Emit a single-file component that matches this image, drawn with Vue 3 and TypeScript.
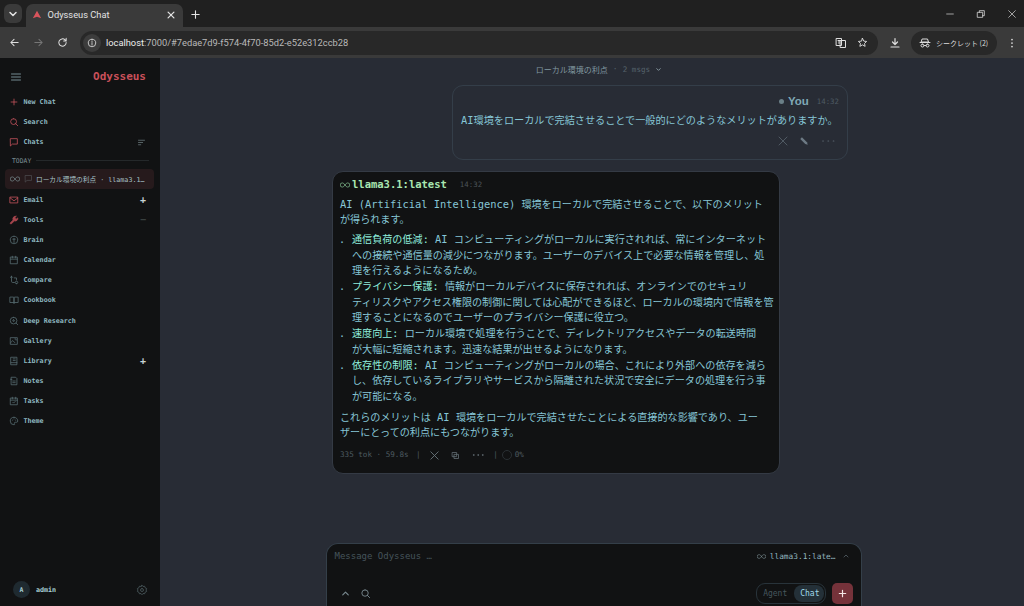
<script setup lang="ts">
interface NavItem {
  label: string
  icon: string
  accent?: boolean
  solid?: boolean
  trail?: string
}

const infinity = 'M12 12c-2-3-4-5-6.500-5a5 5 0 0 0 0 10c2.500 0 4.500-2 6.500-5c2-3 4-5 6.500-5a5 5 0 0 1 0 10c-2.500 0-4.500-2-6.500-5z'

const topNav: NavItem[] = [
  { label: 'New Chat', icon: 'M12 5v14M5 12h14', accent: true },
  { label: 'Search', icon: 'M11 4a7 7 0 1 0 0 14a7 7 0 1 0 0-14M16 16l5 5', accent: true },
  { label: 'Chats', icon: 'M4 4h16v13H8l-4 4z', accent: true, trail: 'sort' }
]

const mainNav: NavItem[] = [
  { label: 'Email', icon: 'M3 5h18v14H3zM3 7l9 7l9-7', accent: true, trail: '+' },
  { label: 'Tools', icon: 'M15 3a6 6 0 0 0-5 9l-7 7v2h3l7-7a6 6 0 0 0 8-7l-4 3l-3-3l3-4z', accent: true, solid: true, trail: '−' },
  { label: 'Brain', icon: 'M12 3a9 9 0 1 0 0 18a9 9 0 1 0 0-18M12 8v10M9 10h6' },
  { label: 'Calendar', icon: 'M4 5h16v16H4zM4 10h16M8 3v4M16 3v4' },
  { label: 'Compare', icon: 'M6 3v12a3 3 0 0 0 3 3h4M3 6l3-3l3 3M18 21a3 3 0 1 0 0-6a3 3 0 1 0 0 6M18 12V7h-5' },
  { label: 'Cookbook', icon: 'M3 5h7a2 2 0 0 1 2 2v13a2 2 0 0 0-2-2H3zM21 5h-7a2 2 0 0 0-2 2v13a2 2 0 0 1 2-2h7z' },
  { label: 'Deep Research', icon: 'M11 3a8 8 0 1 0 0 16a8 8 0 1 0 0-16M17 17l4 4M11 9a2 2 0 1 0 0 4a2 2 0 1 0 0-4' },
  { label: 'Gallery', icon: 'M4 4h16v16H4zM4 16l5-5l5 5M14 7h3v3' },
  { label: 'Library', icon: 'M5 3h14v18H5zM5 16h14M10 7h5M10 11h5', trail: '+' },
  { label: 'Notes', icon: 'M6 3h10l3 3v15H6zM9 12h6M9 16h6M4 8h3' },
  { label: 'Tasks', icon: 'M4 5h16v16H4zM4 10h16M8 3v4M16 3v4M9 15l2 2l4-4' },
  { label: 'Theme', icon: 'M12 3a9 9 0 1 0 0 18c2 0 2-2 1-3s0-3 2-3h3c2 0 3-1 3-3c0-5-4-9-9-9M8 10h.1M12 7h.1M16 10h.1' }
]

interface Item {
  head: string
  lines: string[]
}

// latin runs are set a touch larger than the kana around them
function runs(line: string) {
  return (line.match(/[\x20-\x7e]+|[^\x20-\x7e]+/g) ?? []).map((text) => ({
    text,
    latin: /^[\x20-\x7e]/.test(text)
  }))
}

const userText = 'AI環境をローカルで完結させることで一般的にどのようなメリットがありますか。'

const intro = ['AI (Artificial Intelligence) 環境をローカルで完結させることで、以下のメリット', 'が得られます。']

const points: Item[] = [
  {
    head: '通信負荷の低減:',
    lines: [
      ' AI コンピューティングがローカルに実行されれば、常にインターネット',
      'への接続や通信量の減少につながります。ユーザーのデバイス上で必要な情報を管理し、処',
      '理を行えるようになるため。'
    ]
  },
  {
    head: 'プライバシー保護:',
    lines: [
      ' 情報がローカルデバイスに保存されれば、オンラインでのセキュリ',
      'ティリスクやアクセス権限の制御に関しては心配ができるほど、ローカルの環境内で情報を管',
      '理することになるのでユーザーのプライバシー保護に役立つ。'
    ]
  },
  {
    head: '速度向上:',
    lines: [
      ' ローカル環境で処理を行うことで、ディレクトリアクセスやデータの転送時間',
      'が大幅に短縮されます。迅速な結果が出せるようになります。'
    ]
  },
  {
    head: '依存性の制限:',
    lines: [
      ' AI コンピューティングがローカルの場合、これにより外部への依存を減ら',
      'し、依存しているライブラリやサービスから隔離された状況で安全にデータの処理を行う事',
      'が可能になる。'
    ]
  }
]

const outro = ['これらのメリットは AI 環境をローカルで完結させたことによる直接的な影響であり、ユー', 'ザーにとっての利点にもつながります。']
</script>

<template>
  <div class="window">
    <header class="tabstrip">
      <button class="tab-menu">
        <svg viewBox="0 0 24 24" class="ic12"><path d="M6 9l6 6l6-6" stroke-width="3" /></svg>
      </button>
      <div class="tab">
        <svg viewBox="0 0 24 24" class="favicon"><path d="M12 2L22 20L12 16L2 20z" /></svg>
        <span class="tab-title">Odysseus Chat</span>
        <svg viewBox="0 0 24 24" class="ic10"><path d="M5 5l14 14M19 5L5 19" stroke-width="3" /></svg>
      </div>
      <svg viewBox="0 0 24 24" class="ic11 new-tab"><path d="M12 4v16M4 12h16" stroke-width="2.400" /></svg>
      <div class="win-controls">
        <svg viewBox="0 0 24 24" class="ic10"><path d="M4 12h16" stroke-width="1.600" /></svg>
        <svg viewBox="0 0 24 24" class="ic10"><path d="M4 8h12v12H4zM8 8V4h12v12h-4" stroke-width="1.800" /></svg>
        <svg viewBox="0 0 24 24" class="ic10"><path d="M4 4l16 16M20 4L4 20" stroke-width="1.600" /></svg>
      </div>
    </header>

    <div class="toolbar">
      <svg viewBox="0 0 24 24" class="ic11"><path d="M20 12H4M11 5l-7 7l7 7" stroke-width="2.200" /></svg>
      <svg viewBox="0 0 24 24" class="ic11 dim"><path d="M4 12h16M13 5l7 7l-7 7" stroke-width="2.200" /></svg>
      <svg viewBox="0 0 24 24" class="ic11"><path d="M20 12a8 8 0 1 1-2.500-5.800L20 8.500M20 3v5.500h-5.500" stroke-width="2.200" /></svg>
      <div class="omnibox">
        <span class="info-chip">
          <svg viewBox="0 0 24 24" class="ic10"><path d="M12 3a9 9 0 1 0 0 18a9 9 0 1 0 0-18M12 11v6M12 7v1.500" stroke-width="2" /></svg>
        </span>
        <span class="url"><b>localhost</b>:7000/#7edae7d9-f574-4f70-85d2-e52e312ccb28</span>
        <span class="grow"></span>
        <svg viewBox="0 0 24 24" class="ic12"><path d="M3 3h10v14H3zM11 7h10v14H11zM6 7h4M8 7v6" stroke-width="2" /></svg>
        <svg viewBox="0 0 24 24" class="ic11"><path d="M12 3l2.800 6l6.200.7l-4.600 4.300l1.300 6.400L12 17.200L6.300 20.400L7.600 14L3 9.700L9.200 9z" stroke-width="2" /></svg>
      </div>
      <svg viewBox="0 0 24 24" class="ic12 download"><path d="M12 3v12M7 10l5 5l5-5M4 20h16" stroke-width="2.400" /></svg>
      <div class="incognito">
        <svg viewBox="0 0 24 24" class="ic12"><path d="M7 4h10l2 6H5zM2 11h20M7 14a3 3 0 1 0 0 6a3 3 0 1 0 0-6M17 14a3 3 0 1 0 0 6a3 3 0 1 0 0-6M10 17h4" stroke-width="2" /></svg>
        <span>シークレット (2)</span>
      </div>
      <svg viewBox="0 0 24 24" class="ic12 kebab"><path d="M12 5v.1M12 12v.1M12 19v.1" stroke-width="3.400" /></svg>
    </div>

    <div class="app">
      <aside class="sidebar">
        <div class="brand">
          <svg viewBox="0 0 24 24" class="burger"><path d="M3 6h18M3 12h18M3 18h18" stroke-width="1.800" /></svg>
          <span class="brand-name">Odysseus</span>
        </div>

        <nav class="nav">
          <a v-for="item in topNav" :key="item.label" class="nav-row">
            <svg viewBox="0 0 24 24" class="nav-icon" :class="{ accent: item.accent }"><path :d="item.icon" /></svg>
            <span>{{ item.label }}</span>
            <svg v-if="item.trail === 'sort'" viewBox="0 0 24 24" class="sort"><path d="M4 6h16M4 12h11M4 18h6" stroke-width="2" /></svg>
          </a>
        </nav>

        <div class="today"><span>TODAY</span><i></i></div>
        <div class="chat-row">
          <svg viewBox="0 0 24 24" class="inf"><path :d="infinity" /></svg>
          <svg viewBox="0 0 24 24" class="chat-ic"><path d="M4 4h16v13H8l-4 4z" /></svg>
          <span class="chat-title">ローカル環境の利点 · llama3.1…</span>
        </div>

        <nav class="nav main-nav">
          <a v-for="item in mainNav" :key="item.label" class="nav-row">
            <svg viewBox="0 0 24 24" class="nav-icon" :class="{ accent: item.accent, solid: item.solid }"><path :d="item.icon" /></svg>
            <span>{{ item.label }}</span>
            <em v-if="item.trail" class="trail" :class="{ faint: item.trail === '−' }">{{ item.trail }}</em>
          </a>
        </nav>

        <div class="grow"></div>

        <div class="account">
          <span class="avatar">A</span>
          <span class="acct-name">admin</span>
          <svg viewBox="0 0 24 24" class="gear"><path d="M12 2.500l2 2.500l3.200-.5l1 3l3 1.500l-1 3l1 3l-3 1.500l-1 3l-3.200-.5l-2 2.500l-2-2.500l-3.200.5l-1-3l-3-1.500l1-3l-1-3l3-1.500l1-3l3.200.5zM12 9a3 3 0 1 0 0 6a3 3 0 1 0 0-6" /></svg>
        </div>
      </aside>

      <main class="main">
        <div class="conv-title">
          <span>ローカル環境の利点</span>
          <span class="dot">·</span>
          <span class="count">2 msgs</span>
          <svg viewBox="0 0 24 24" class="chev"><path d="M6 9l6 6l6-6" stroke-width="3" /></svg>
        </div>

        <div class="thread">
          <section class="user-msg">
            <div class="user-head">
              <i class="online"></i>
              <strong>You</strong>
              <time>14:32</time>
            </div>
            <p class="user-text">
              <span v-for="run in runs(userText)" :key="run.text" :class="{ latin: run.latin }">{{ run.text }}</span>
            </p>
            <div class="user-actions">
              <svg viewBox="0 0 24 24"><path d="M4 4l16 16M20 4L4 20" stroke-width="1.600" /></svg>
              <svg viewBox="0 0 24 24" class="pencil"><path d="M3 7l4-4l12 12l2 6l-6-2z" /></svg>
              <svg viewBox="0 0 24 24" class="dots"><path d="M3 12h1M12 12h1M21 12h1" stroke-width="2" /></svg>
            </div>
          </section>

          <section class="bot-msg">
            <div class="bot-head">
              <svg viewBox="0 0 24 24" class="inf-green"><path :d="infinity" /></svg>
              <strong>llama3.1:latest</strong>
              <time>14:32</time>
            </div>
            <p class="para">
              <span v-for="line in intro" :key="line" class="line">
                <span v-for="run in runs(line)" :key="run.text" :class="{ latin: run.latin }">{{ run.text }}</span>
              </span>
            </p>
            <ul class="points">
              <li v-for="point in points" :key="point.head">
                <span class="bullet">.</span>
                <div>
                  <span class="line"><b>{{ point.head }}</b><span v-for="run in runs(point.lines[0])" :key="run.text" :class="{ latin: run.latin }">{{ run.text }}</span></span>
                  <span v-for="line in point.lines.slice(1)" :key="line" class="line">{{ line }}</span>
                </div>
              </li>
            </ul>
            <p class="para">
              <span v-for="line in outro" :key="line" class="line">
                <span v-for="run in runs(line)" :key="run.text" :class="{ latin: run.latin }">{{ run.text }}</span>
              </span>
            </p>
            <div class="bot-foot">
              <span>335 tok · 59.8s</span>
              <span class="sep-a">|</span>
              <svg viewBox="0 0 24 24" class="foot-x"><path d="M4 4l16 16M20 4L4 20" stroke-width="2" /></svg>
              <svg viewBox="0 0 24 24" class="foot-copy"><path d="M4 4h11v11H4zM9 9h11v11H9z" stroke-width="2" /></svg>
              <svg viewBox="0 0 24 24" class="foot-dots"><path d="M3 12h1M12 12h1M21 12h1" stroke-width="2.600" /></svg>
              <span class="sep-b">|</span>
              <i class="ring"></i>
              <span class="pct">0%</span>
            </div>
          </section>
        </div>

        <div class="grow"></div>

        <form class="composer" @submit.prevent>
          <div class="composer-top">
            <span class="placeholder">Message Odysseus …</span>
            <span class="model">
              <svg viewBox="0 0 24 24" class="inf-model"><path :d="infinity" /></svg>
              llama3.1:late…
              <svg viewBox="0 0 24 24" class="chev-up"><path d="M6 15l6-6l6 6" stroke-width="2.400" /></svg>
            </span>
          </div>
          <div class="composer-bottom">
            <svg viewBox="0 0 24 24" class="tool"><path d="M6 15l6-6l6 6" stroke-width="2.600" /></svg>
            <svg viewBox="0 0 24 24" class="tool"><path d="M11 4a7 7 0 1 0 0 14a7 7 0 1 0 0-14M16 16l5 5" stroke-width="2" /></svg>
            <span class="grow"></span>
            <div class="mode">
              <span class="agent">Agent</span>
              <span class="active">Chat</span>
            </div>
            <button class="send">
              <svg viewBox="0 0 24 24"><path d="M12 5v14M5 12h14" stroke-width="2.600" /></svg>
            </button>
          </div>
        </form>
      </main>
    </div>
  </div>
</template>

<style>
html,
body {
  margin: 0;
  height: 100%;
  overflow: hidden;
  background: #111;
}
</style>

<style scoped>
.window {
  width: 1024px;
  height: 606px;
  display: flex;
  flex-direction: column;
  overflow: hidden;
  font-family: "DejaVu Sans Mono", "Noto Sans CJK JP", monospace;
}

svg {
  display: block;
  flex: none;
  fill: none;
  stroke: currentColor;
  stroke-linecap: round;
  stroke-linejoin: round;
}

.grow {
  flex: 1;
}

.ic10 {
  width: 10px;
  height: 10px;
}

.ic11 {
  width: 11px;
  height: 11px;
}

.ic12 {
  width: 12px;
  height: 12px;
}

.dim {
  color: #767676;
}

.latin {
  font-size: 10.400px;
}

/* browser frame */
.tabstrip {
  height: 27px;
  flex: none;
  display: flex;
  align-items: flex-end;
  padding-left: 4px;
  background: #202020;
  color: #e3e3e3;
}

.tab-menu {
  width: 18px;
  height: 19px;
  margin: 0 4px 4px 0;
  padding: 0;
  border: 0;
  border-radius: 6px;
  background: #3a3a3a;
  color: #e3e3e3;
  display: flex;
  align-items: center;
  justify-content: center;
}

.tab {
  width: 157px;
  height: 23px;
  display: flex;
  align-items: center;
  gap: 5.500px;
  box-sizing: border-box;
  padding: 0 7px 2px 6px;
  border-radius: 7px 7px 0 0;
  background: #3a3a3a;
}

.favicon {
  width: 10px;
  height: 10px;
  fill: #d9545c;
  stroke: none;
}

.tab-title {
  flex: 1;
  font: 9.300px "Roboto", "Liberation Sans", sans-serif;
  color: #e3e3e3;
}

.new-tab {
  margin: 0 0 7px 6.500px;
}

.win-controls {
  margin-left: auto;
  height: 27px;
  display: flex;
  align-items: center;
  gap: 21px;
  padding-right: 7px;
}

.toolbar {
  height: 31px;
  flex: none;
  display: flex;
  align-items: center;
  gap: 13px;
  padding: 0 9px;
  box-sizing: border-box;
  background: #3a3a3a;
  color: #dfdfdf;
}

.omnibox {
  width: 798px;
  height: 24px;
  margin-left: -1px;
  flex: none;
  display: flex;
  align-items: center;
  gap: 5px;
  box-sizing: border-box;
  padding: 0 10px 0 3px;
  border-radius: 12px;
  background: #282828;
}

.omnibox > .ic12 {
  margin-right: 5px;
}

.info-chip {
  width: 18px;
  height: 18px;
  border-radius: 50%;
  background: #3c3c3c;
  display: flex;
  align-items: center;
  justify-content: center;
}

.url {
  font: 9.300px "Roboto", "Liberation Sans", sans-serif;
  color: #b9b9b9;
}

.url b {
  font-weight: 400;
  color: #ececec;
}

.download {
  margin-left: -2px;
}

.incognito {
  width: 86px;
  height: 24px;
  margin-left: -3px;
  flex: none;
  box-sizing: border-box;
  padding-left: 8px;
  display: flex;
  align-items: center;
  gap: 5px;
  border-radius: 12px;
  background: #282828;
  font: 7px "Noto Sans CJK JP", sans-serif;
  color: #dcdcdc;
  white-space: nowrap;
}

.kebab {
  margin-left: -4px;
}

/* app */
.app {
  flex: 1;
  min-height: 0;
  display: flex;
}

.sidebar {
  width: 160px;
  flex: none;
  display: flex;
  flex-direction: column;
  box-sizing: border-box;
  background: #111213;
  color: #a8cfd6;
}

.brand {
  height: 34px;
  flex: none;
  display: flex;
  align-items: center;
  justify-content: space-between;
  box-sizing: border-box;
  padding: 3px 14px 0 10px;
}

.burger {
  width: 12px;
  height: 12px;
  color: #7f9aa0;
}

.brand-name {
  font-size: 11px;
  font-weight: 700;
  color: #c9505a;
}

.nav {
  display: flex;
  flex-direction: column;
}

.main-nav {
  margin-top: 1px;
}

.nav-row {
  height: 20.180px;
  display: flex;
  align-items: center;
  gap: 4.500px;
  padding: 0 14px 0 9px;
  font-size: 6.700px;
  font-weight: 700;
  color: #8fb9c1;
}

.nav-icon {
  width: 10px;
  height: 10px;
  stroke-width: 1.800;
  color: #5b7278;
}

.nav-icon.accent {
  color: #cf5660;
}

.nav-icon.solid {
  fill: #a8464e;
  color: #a8464e;
}

.sort {
  width: 9px;
  height: 9px;
  margin-left: auto;
  color: #6e7d80;
}

.trail {
  margin-left: auto;
  font-style: normal;
  font-size: 10px;
  font-weight: 700;
  color: #c7d3d5;
}

.trail.faint {
  color: #39403f;
}

.today {
  height: 16px;
  display: flex;
  align-items: center;
  gap: 5px;
  padding: 0 11px 0 12px;
  font-size: 6.400px;
  color: #7d9096;
}

.today i {
  flex: 1;
  height: 1px;
  background: #24282a;
}

.chat-row {
  height: 20px;
  margin: 0 6px 0 5px;
  display: flex;
  align-items: center;
  gap: 3px;
  padding-left: 5px;
  border-radius: 4px;
  background: #261a1c;
  font-size: 6.700px;
  color: #a9c3c9;
  white-space: nowrap;
}

.inf {
  width: 10px;
  height: 10px;
  stroke-width: 1.800;
  color: #75868a;
}

.chat-ic {
  width: 9px;
  height: 9px;
  margin-left: 1px;
  stroke-width: 1.600;
  color: #56585a;
}

.account {
  height: 33px;
  flex: none;
  display: flex;
  align-items: center;
  padding: 0 12px 0 13px;
}

.avatar {
  width: 17px;
  height: 17px;
  border-radius: 50%;
  background: #1f2a30;
  color: #a8cfd6;
  font-size: 6.500px;
  font-weight: 700;
  display: flex;
  align-items: center;
  justify-content: center;
}

.acct-name {
  margin-left: 6px;
  font-size: 6.700px;
  font-weight: 700;
}

.gear {
  width: 12px;
  height: 12px;
  margin-left: auto;
  stroke-width: 1.600;
  color: #4d5c60;
}

.main {
  flex: 1;
  min-width: 0;
  display: flex;
  flex-direction: column;
  align-items: center;
  background: #282c35;
  color: #86c6d6;
  font-size: 10.100px;
}

.conv-title {
  height: 27px;
  margin-left: 14px;
  flex: none;
  display: flex;
  align-items: center;
  gap: 5px;
  box-sizing: border-box;
  padding-bottom: 4px;
  font-size: 8px;
  color: #8198a0;
}

.dot,
.count {
  color: #55626b;
}

.count {
  font-size: 7.600px;
}

.chev {
  width: 7px;
  height: 7px;
  color: #8fa2a9;
}

.thread {
  width: 516px;
  margin-left: -4px;
  flex: none;
  display: flex;
  flex-direction: column;
  align-items: flex-start;
  gap: 11px;
}

.user-msg {
  align-self: flex-end;
  width: 396px;
  height: 75px;
  box-sizing: border-box;
  padding: 9px 8px 0;
  border: 1px solid #343e49;
  border-radius: 11px;
}

.user-head {
  display: flex;
  align-items: center;
  justify-content: flex-end;
  gap: 4px;
  height: 12px;
}

.online {
  width: 5px;
  height: 5px;
  border-radius: 50%;
  background: #6a7f87;
}

.user-head strong {
  font-family: "Liberation Sans", sans-serif;
  font-size: 11.500px;
  font-weight: 700;
  color: #7fa8b5;
}

.user-head time {
  margin-left: 4px;
  font-size: 7.400px;
  color: #4e5a63;
}

.user-text {
  margin: 6px 0 0;
  font-size: 10.150px;
  line-height: 15px;
  white-space: nowrap;
  color: #86c6d6;
}

.user-actions {
  margin-top: 6px;
  display: flex;
  justify-content: flex-end;
  align-items: center;
  gap: 10px;
  padding-right: 4px;
  color: #5b6670;
}

.user-actions svg {
  width: 12px;
  height: 12px;
}

.user-actions .pencil {
  width: 10px;
  height: 10px;
  fill: #6d7a85;
  stroke: none;
}

.user-actions .dots {
  width: 14px;
  height: 14px;
  margin-left: 2px;
}

.bot-msg {
  width: 448px;
  height: 303px;
  box-sizing: border-box;
  padding: 5px 8px 0 7px;
  border: 1px solid #343a44;
  border-radius: 11px;
  background: #111213;
  font-size: 10.100px;
  line-height: 15.600px;
}

.bot-head {
  height: 16px;
  display: flex;
  align-items: center;
  gap: 2px;
}

.inf-green {
  width: 10px;
  height: 10px;
  stroke-width: 1.800;
  color: #7fb98c;
}

.bot-head strong {
  font-size: 10.500px;
  font-weight: 700;
  color: #a9e6b0;
}

.bot-head time {
  margin-left: 11px;
  font-size: 7.400px;
  color: #4c5358;
}

.para {
  margin: 3.500px 0 0;
}

.line {
  display: block;
  white-space: pre;
}

.points {
  margin: 4.500px 0 5px;
  padding: 0;
  list-style: none;
}

.points li {
  display: flex;
  margin-bottom: 0.300px;
}

.bullet {
  width: 12px;
  margin-left: -1px;
  padding-right: 1px;
  flex: none;
}

.points b {
  font-weight: 400;
  color: #8feedd;
}

.bot-foot {
  margin-top: 6.500px;
  display: flex;
  align-items: center;
  gap: 4px;
  font-size: 7.600px;
  color: #4d5a60;
}

.bot-foot svg {
  color: #67737a;
}

.sep-a {
  margin-left: 3.500px;
}

.foot-x {
  width: 11px;
  height: 11px;
  margin: 0 7px 0 4px;
}

.foot-copy {
  width: 9px;
  height: 9px;
  margin-right: 8px;
}

.foot-dots {
  width: 12px;
  height: 12px;
  margin-right: 5.500px;
}

.ring {
  width: 8px;
  height: 8px;
  border: 1px solid #2a3034;
  border-radius: 50%;
}

.pct {
  margin-left: -1px;
}

.composer {
  width: 536px;
  height: 63px;
  margin-left: 3px;
  flex: none;
  display: flex;
  flex-direction: column;
  box-sizing: border-box;
  padding: 7px 8px 2.500px 8px;
  border: 1px solid #343f49;
  border-bottom: 0;
  border-radius: 12px 12px 0 0;
  background: #111213;
}

.composer-top {
  display: flex;
  align-items: center;
  justify-content: space-between;
  padding-right: 3px;
}

.placeholder {
  font-size: 9px;
  color: #45545b;
}

.model {
  display: flex;
  align-items: center;
  gap: 4px;
  font-size: 7.800px;
  color: #93b8c0;
}

.inf-model {
  width: 9px;
  height: 9px;
  stroke-width: 1.800;
  color: #75868a;
}

.chev-up {
  width: 8px;
  height: 8px;
  margin-left: 2px;
  color: #56626a;
}

.composer-bottom {
  margin-top: auto;
  display: flex;
  align-items: center;
  padding-left: 5px;
}

.tool {
  width: 11px;
  height: 11px;
  margin-right: 9px;
  color: #78888e;
}

.mode {
  height: 21px;
  display: flex;
  align-items: stretch;
  box-sizing: border-box;
  padding: 1px;
  border: 1px solid #28333a;
  border-radius: 9px;
  font-size: 8px;
  color: #46565d;
}

.mode span {
  display: flex;
  align-items: center;
  border-radius: 8px;
}

.mode .agent {
  padding: 0 7px 0 5px;
}

.mode .active {
  padding: 0 4px 0 6px;
  background: #243038;
  color: #a0d8e8;
}

.send {
  width: 21px;
  height: 21px;
  margin-left: 6px;
  padding: 0;
  border: 0;
  border-radius: 5px;
  background: #75323a;
  color: #f4e6e6;
  display: flex;
  align-items: center;
  justify-content: center;
}

.send svg {
  width: 11px;
  height: 11px;
}
</style>
